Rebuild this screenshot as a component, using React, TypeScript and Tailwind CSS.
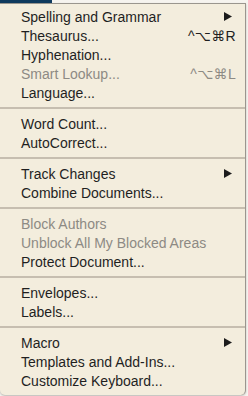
import React from "react";

type Item = { label: string; disabled?: boolean; shortcut?: string; sub?: boolean };

const groups: Item[][] = [
  [
    { label: "Spelling and Grammar", sub: true },
    { label: "Thesaurus...", shortcut: "^⌥⌘R" },
    { label: "Hyphenation..." },
    { label: "Smart Lookup...", shortcut: "^⌥⌘L", disabled: true },
    { label: "Language..." },
  ],
  [{ label: "Word Count..." }, { label: "AutoCorrect..." }],
  [{ label: "Track Changes", sub: true }, { label: "Combine Documents..." }],
  [
    { label: "Block Authors", disabled: true },
    { label: "Unblock All My Blocked Areas", disabled: true },
    { label: "Protect Document..." },
  ],
  [{ label: "Envelopes..." }, { label: "Labels..." }],
  [{ label: "Macro", sub: true }, { label: "Templates and Add-Ins..." }, { label: "Customize Keyboard..." }],
];

function Arrow() {
  return (
    <svg width="8" height="9" viewBox="0 0 8 9" className="mr-[4px]">
      <polygon points="0,0 8,4.5 0,9" fill="#1c1c1c" />
    </svg>
  );
}

function Row({ item }: { item: Item }) {
  return (
    <div
      className={`h-[19px] flex items-center justify-between pl-[21px] pr-[9px] text-[14px] leading-none ${
        item.disabled ? "text-[#8d8a84]" : "text-[#1f1f1f]"
      }`}
    >
      <span>{item.label}</span>
      {item.shortcut && <span className="tracking-[0.3px]">{item.shortcut}</span>}
      {item.sub && <Arrow />}
    </div>
  );
}

export default function App() {
  return (
    <div
      className="w-[248px] h-[396px] bg-[#f6f4ef] overflow-hidden"
      style={{ fontFamily: '"Liberation Sans", "DejaVu Sans", sans-serif' }}
    >
      <div className="h-[3px] flex">
        <div className="w-[52px] bg-[#0f3a5e]" />
      </div>
      <div className="w-[246px] bg-[#f3eddd] border-t border-r border-[#9a968e] rounded-b-[5px] pt-[3px] pb-[5px] shadow-[0_1px_2px_rgba(0,0,0,0.25)]">
        {groups.map((g, i) => (
          <div key={i}>
            {i > 0 && <div className="h-[2px] my-[5px] bg-[#c6beb0]" />}
            {g.map((item) => (
              <Row key={item.label} item={item} />
            ))}
          </div>
        ))}
      </div>
    </div>
  );
}
